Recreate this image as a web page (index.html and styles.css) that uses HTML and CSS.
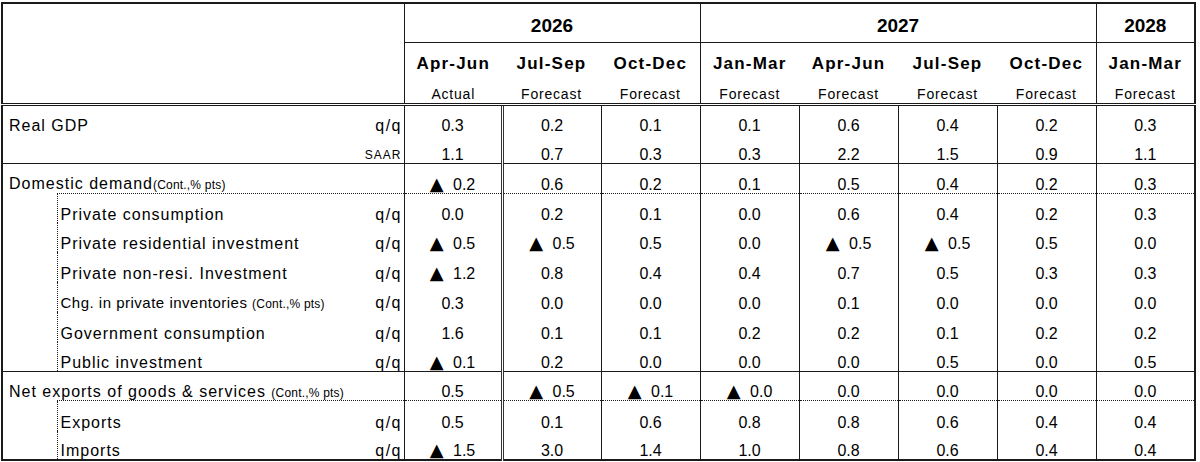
FILE: index.html
```html
<!DOCTYPE html>
<html lang="en">
<head>
<meta charset="utf-8">
<title>Forecast table</title>
<link rel="stylesheet" href="styles.css">
</head>
<body>
<table class="t">
  <colgroup>
    <col class="c-ind"><col class="c-lab"><col class="c-d1">
    <col class="c-d"><col class="c-d"><col class="c-d"><col class="c-d"><col class="c-d"><col class="c-d"><col class="c-d">
  </colgroup>
  <thead>
    <tr class="yr">
      <th class="corner" colspan="2" rowspan="2"></th>
      <th colspan="3">2026</th>
      <th colspan="4">2027</th>
      <th>2028</th>
    </tr>
    <tr class="qt">
      <th><div class="qn">Apr-Jun</div><div class="qs">Actual</div></th>
      <th><div class="qn">Jul-Sep</div><div class="qs">Forecast</div></th>
      <th><div class="qn">Oct-Dec</div><div class="qs">Forecast</div></th>
      <th class="yb"><div class="qn">Jan-Mar</div><div class="qs">Forecast</div></th>
      <th><div class="qn">Apr-Jun</div><div class="qs">Forecast</div></th>
      <th><div class="qn">Jul-Sep</div><div class="qs">Forecast</div></th>
      <th><div class="qn">Oct-Dec</div><div class="qs">Forecast</div></th>
      <th class="yb"><div class="qn">Jan-Mar</div><div class="qs">Forecast</div></th>
    </tr>
  </thead>
  <tbody>
    <tr>
      <td class="lab main" colspan="2"><div class="lw"><span>Real GDP</span><span class="u">q/q</span></div></td>
      <td class="d d1">0.3</td><td class="d">0.2</td><td class="d">0.1</td><td class="d">0.1</td><td class="d">0.6</td><td class="d">0.4</td><td class="d">0.2</td><td class="d">0.3</td>
    </tr>
    <tr class="sepb">
      <td class="lab main" colspan="2"><div class="lw"><span></span><span class="u sm">SAAR</span></div></td>
      <td class="d d1">1.1</td><td class="d">0.7</td><td class="d">0.3</td><td class="d">0.3</td><td class="d">2.2</td><td class="d">1.5</td><td class="d">0.9</td><td class="d">1.1</td>
    </tr>
    <tr class="grp">
      <td class="ind gl">Domestic demand<span class="cp">(Cont.,% pts)</span></td><td class="lab gb"></td>
      <td class="d d1"><span class="tri">▲</span> 0.2</td><td class="d">0.6</td><td class="d">0.2</td><td class="d">0.1</td><td class="d">0.5</td><td class="d">0.4</td><td class="d">0.2</td><td class="d">0.3</td>
    </tr>
    <tr>
      <td class="ind"></td><td class="lab sub"><div class="lw"><span>Private consumption</span><span class="u">q/q</span></div></td>
      <td class="d d1">0.0</td><td class="d">0.2</td><td class="d">0.1</td><td class="d">0.0</td><td class="d">0.6</td><td class="d">0.4</td><td class="d">0.2</td><td class="d">0.3</td>
    </tr>
    <tr>
      <td class="ind"></td><td class="lab sub"><div class="lw"><span>Private residential investment</span><span class="u">q/q</span></div></td>
      <td class="d d1"><span class="tri">▲</span> 0.5</td><td class="d"><span class="tri">▲</span> 0.5</td><td class="d">0.5</td><td class="d">0.0</td><td class="d"><span class="tri">▲</span> 0.5</td><td class="d"><span class="tri">▲</span> 0.5</td><td class="d">0.5</td><td class="d">0.0</td>
    </tr>
    <tr>
      <td class="ind"></td><td class="lab sub"><div class="lw"><span>Private non-resi. Investment</span><span class="u">q/q</span></div></td>
      <td class="d d1"><span class="tri">▲</span> 1.2</td><td class="d">0.8</td><td class="d">0.4</td><td class="d">0.4</td><td class="d">0.7</td><td class="d">0.5</td><td class="d">0.3</td><td class="d">0.3</td>
    </tr>
    <tr>
      <td class="ind"></td><td class="lab sub"><div class="lw"><span class="nar">Chg. in private inventories <span class="cp">(Cont.,% pts)</span></span><span class="u">q/q</span></div></td>
      <td class="d d1">0.3</td><td class="d">0.0</td><td class="d">0.0</td><td class="d">0.0</td><td class="d">0.1</td><td class="d">0.0</td><td class="d">0.0</td><td class="d">0.0</td>
    </tr>
    <tr>
      <td class="ind"></td><td class="lab sub"><div class="lw"><span>Government consumption</span><span class="u">q/q</span></div></td>
      <td class="d d1">1.6</td><td class="d">0.1</td><td class="d">0.1</td><td class="d">0.2</td><td class="d">0.2</td><td class="d">0.1</td><td class="d">0.2</td><td class="d">0.2</td>
    </tr>
    <tr class="sepb">
      <td class="ind"></td><td class="lab sub"><div class="lw"><span>Public investment</span><span class="u">q/q</span></div></td>
      <td class="d d1"><span class="tri">▲</span> 0.1</td><td class="d">0.2</td><td class="d">0.0</td><td class="d">0.0</td><td class="d">0.0</td><td class="d">0.5</td><td class="d">0.0</td><td class="d">0.5</td>
    </tr>
    <tr class="grp">
      <td class="ind gl">Net exports of goods &amp; services <span class="cp">(Cont.,% pts)</span></td><td class="lab gb"></td>
      <td class="d d1">0.5</td><td class="d"><span class="tri">▲</span> 0.5</td><td class="d"><span class="tri">▲</span> 0.1</td><td class="d"><span class="tri">▲</span> 0.0</td><td class="d">0.0</td><td class="d">0.0</td><td class="d">0.0</td><td class="d">0.0</td>
    </tr>
    <tr>
      <td class="ind"></td><td class="lab sub"><div class="lw"><span>Exports</span><span class="u">q/q</span></div></td>
      <td class="d d1">0.5</td><td class="d">0.1</td><td class="d">0.6</td><td class="d">0.8</td><td class="d">0.8</td><td class="d">0.6</td><td class="d">0.4</td><td class="d">0.4</td>
    </tr>
    <tr>
      <td class="ind"></td><td class="lab sub"><div class="lw"><span>Imports</span><span class="u">q/q</span></div></td>
      <td class="d d1"><span class="tri">▲</span> 1.5</td><td class="d">3.0</td><td class="d">1.4</td><td class="d">1.0</td><td class="d">0.8</td><td class="d">0.6</td><td class="d">0.4</td><td class="d">0.4</td>
    </tr>
  </tbody>
</table>
</body>
</html>
```

FILE: styles.css
```css
html, body {
  margin: 0;
  padding: 0;
  background: #fff;
}
body {
  padding: 2px 0 0 1px;
  font-family: "Liberation Sans", Arial, sans-serif;
  color: #000;
}
.t {
  border-collapse: collapse;
  table-layout: fixed;
  width: 1194px;
  border: 2px solid #1a1a1a;
}
.c-ind { width: 55px; }
.c-lab { width: 347px; }
.c-d1 { width: 98px; }
.c-d { width: 99px; }

th, td {
  padding: 0;
  border: none;
  white-space: nowrap;
}

/* header */
.yr th {
  height: 39px;
  font-size: 19px;
  font-weight: bold;
  text-align: center;
  vertical-align: bottom;
  padding-bottom: 5px;
  border: 1px solid #1a1a1a;
  box-sizing: border-box;
}
.yr th.corner {
  border-bottom: 3px double #1a1a1a;
  border-right: 1px solid #1a1a1a;
}
.qt th {
  height: 58px;
  text-align: center;
  vertical-align: top;
  border-bottom: 3px double #1a1a1a;
}
.qt th.yb {
  border-left: 1px solid #1a1a1a;
}
.qn {
  font-size: 17px;
  font-weight: bold;
  letter-spacing: 1.2px;
  line-height: 20px;
  padding-top: 11px;
}
.qs {
  font-size: 14px;
  font-weight: normal;
  letter-spacing: 0.8px;
  line-height: 18px;
  padding-top: 11px;
}

/* body */
tbody tr {
  height: 29.7px;
}
tbody td {
  font-size: 16px;
  line-height: 14px;
  vertical-align: bottom;
  padding-bottom: 1px;
}
.d {
  text-align: center;
  border-left: 1px solid #1a1a1a;
  border-right: 1px solid #1a1a1a;
}
.d.d1 {
  border-right: 3px double #333;
}
.lab {
  border-right: 1px solid #1a1a1a;
  letter-spacing: 1px;
}
.lab.main {
  padding-left: 6px;
  padding-right: 3px;
}
.lab.sub {
  padding-left: 3px;
  padding-right: 3px;
  border-left: 1px dotted #1a1a1a;
}
.lw {
  display: flex;
  justify-content: space-between;
  align-items: baseline;
}
.u {
  letter-spacing: 1.5px;
  margin-right: -1.5px;
}
.u.sm {
  font-size: 12px;
  letter-spacing: 1px;
  margin-right: -1px;
}
.nar {
  font-size: 15px;
  letter-spacing: 0.5px;
}
.cp {
  font-size: 12px;
  letter-spacing: 0.2px;
}
.ind.gl {
  padding-left: 6px;
  overflow: visible;
  letter-spacing: 1px;
}
.grp .gb,
.grp .d {
  border-bottom: 1px dotted #1a1a1a;
}
.sepb td {
  border-bottom: 1px solid #1a1a1a;
}
.tri {
  font-family: "DejaVu Sans", sans-serif;
  font-size: 18px;
  line-height: 14px;
  margin-right: 5px;
}
```
